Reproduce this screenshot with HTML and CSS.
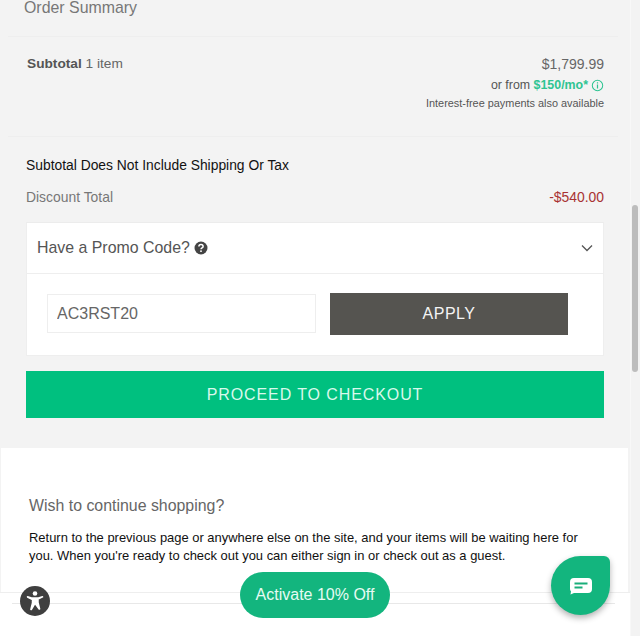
FILE: index.html
```html
<!DOCTYPE html>
<html lang="en">
<head>
<meta charset="utf-8">
<title>Order Summary</title>
<link rel="stylesheet" href="styles.css">
</head>
<body>
<div class="page">
  <section class="summary">
    <h2 class="summary-title">Order Summary</h2>
    <div class="subtotal">
      <div class="subtotal-label"><b>Subtotal</b> 1 item</div>
      <div class="subtotal-prices">
        <div class="price">$1,799.99</div>
        <div class="finance"><span>or from <b>$150/mo*</b></span><svg class="info" viewBox="0 0 14 14" width="13" height="13" aria-hidden="true"><circle cx="7" cy="7" r="5.6" fill="none" stroke="currentColor" stroke-width="1.1"/><path d="M7 6v4.2M7 3.6v1.3" fill="none" stroke="currentColor" stroke-width="1.3"/></svg></div>
        <div class="interest">Interest-free payments also available</div>
      </div>
    </div>
    <div class="totals">
      <p class="note">Subtotal Does Not Include Shipping Or Tax</p>
      <div class="discount"><span>Discount Total</span><span class="discount-value">-$540.00</span></div>
      <div class="promo">
        <div class="promo-head">
          <div class="promo-title"><span>Have a Promo Code?</span><svg class="help" viewBox="0 0 14 14" width="14" height="14" aria-hidden="true"><circle cx="7" cy="7" r="6.5" fill="#444"/><path d="M4.900 5.500c0-1.200 1-1.900 2.100-1.900s2.100.7 2.100 1.800c0 1.600-2.100 1.500-2.100 2.900" fill="none" stroke="#fff" stroke-width="1.500"/><rect x="6.200" y="9.400" width="1.600" height="1.600" fill="#fff"/></svg></div>
          <svg class="chevron" viewBox="0 0 12 8" width="12" height="8" aria-hidden="true"><path d="M1 1.500l5 5 5-5" fill="none" stroke="#555" stroke-width="1.300"/></svg>
        </div>
        <div class="promo-body">
          <input class="promo-input" type="text" value="AC3RST20" aria-label="Promo code">
          <button class="apply" type="button">APPLY</button>
        </div>
      </div>
      <button class="checkout" type="button">PROCEED TO CHECKOUT</button>
    </div>
  </section>
  <section class="continue">
    <h3 class="continue-title">Wish to continue shopping?</h3>
    <p class="continue-text">Return to the previous page or anywhere else on the site, and your items will be waiting here for you. When you're ready to check out you can either sign in or check out as a guest.</p>
  </section>
  <div class="foot"><div class="foot-line"></div></div>
</div>

<div class="scrollbar"><div class="thumb"></div></div>
<button class="a11y" type="button" aria-label="Accessibility">
  <svg viewBox="0 0 30 30" width="30" height="30" aria-hidden="true"><circle cx="15" cy="7.500" r="2.300" fill="#fff"/><path d="M7.500 10.800l4 1.200h7l4-1.200v.1l-4.500 2.100v3.500l1.600 6.500h-.4L15.500 18h-1l-3.200 5.500h-.4l1.600-6.500v-3.500l-4.500-2.100z" fill="#fff" stroke="#fff" stroke-width="1.500" stroke-linejoin="round"/></svg>
</button>
<button class="activate" type="button">Activate 10% Off</button>
<button class="chat" type="button" aria-label="Chat">
  <svg viewBox="0 0 24 18" width="24" height="18" aria-hidden="true"><path d="M5 1h14a4 4 0 0 1 4 4v7a4 4 0 0 1-4 4H5l-3.500 1.500.5-3A4 4 0 0 1 1 12V5a4 4 0 0 1 4-4z" fill="#fff"/><path d="M5.500 6.500h13M5.500 10.500h8" stroke="#1aae7a" stroke-width="1.800"/></svg>
</button>
</body>
</html>
```
FILE: styles.css
```css
* { box-sizing: border-box; }
html, body { margin: 0; padding: 0; height: 100%; overflow: hidden; background: #fff; }
body { font-family: "Liberation Sans", Arial, sans-serif; color: #333; width: 640px; height: 636px; position: relative; }
.page { width: 640px; height: 636px; overflow: hidden; display: flex; flex-direction: column; background: #f3f3f3; padding-right: 12px; }
.summary { height: 448px; flex: none; padding: 0 10px 0 8px; }
.summary-title { margin: 0; height: 37px; padding: 0 0 0 16px; font-size: 15.900px; font-weight: 400; line-height: 15px; color: #777; border-bottom: 1px solid #eee; }
.subtotal { display: flex; justify-content: space-between; height: 100px; padding: 18px 14px 0 19px; border-bottom: 1px solid #eee; }
.subtotal-label { font-size: 13.700px; line-height: 18px; color: #666; }
.subtotal-label b { color: #555; }
.subtotal-prices { text-align: right; }
.price { font-size: 14px; line-height: 18px; color: #666; }
.finance { font-size: 12.400px; line-height: 16px; margin-top: 4px; color: #555; display: flex; align-items: center; justify-content: flex-end; gap: 3px; }
.finance b { color: #2fc492; }
.info { color: #2fc492; }
.interest { font-size: 10.900px; line-height: 12px; margin-top: 4px; color: #555; }
.totals { padding: 0 14px 0 18px; }
.note { margin: 20px 0 0; font-size: 13.850px; line-height: 17px; color: #111; }
.discount { display: flex; justify-content: space-between; margin-top: 15px; font-size: 13.900px; line-height: 17px; color: #777; }
.discount-value { color: #a83232; }
.promo { margin-top: 16px; height: 134px; background: #fff; border: 1px solid #eee; border-top-color: #ececec; }
.promo-head { height: 51px; display: flex; align-items: center; justify-content: space-between; padding: 0 10px 0 10px; border-bottom: 1px solid #eee; }
.promo-title { font-size: 15.900px; color: #555; display: flex; align-items: center; gap: 4px; }
.promo-body { display: flex; gap: 14px; align-items: flex-start; padding: 19px 35px 0 20px; }
.promo-input { width: 269px; height: 39px; margin-top: 1px; border: 1px solid #eee; padding: 0 9px; font: 16px "Liberation Sans", Arial, sans-serif; color: #666; background: #fff; outline: 0; }
.apply { flex: 1; height: 42px; border: 0; background: #555450; color: #f4f4f4; font: 16px "Liberation Sans", Arial, sans-serif; letter-spacing: .5px; }
.checkout { display: block; width: 100%; height: 47px; margin-top: 15px; border: 0; background: #00c07f; color: #d9f8ec; font: 16px "Liberation Sans", Arial, sans-serif; letter-spacing: .9px; }
.continue { height: 144px; flex: none; margin-left: 1px; padding: 49px 40px 0 28px; background: #fff; }
.continue-title { margin: 0; font-size: 15.900px; font-weight: 400; line-height: 18px; color: #666; }
.continue-text { margin: 14px 0 0; font-size: 12.950px; line-height: 18px; color: #111; }
.foot { flex: 1; background: #fff; margin-right: -12px; padding: 10px 25px 0 12px; border-top: 1px solid #eee; }
.foot-line { border-top: 1px solid #e8e8e8; }
.scrollbar { position: absolute; top: 0; right: 0; bottom: 0; width: 10px; background: #f3f3f3; border-left: 1px solid #f8f8f8; }
.thumb { position: absolute; top: 205px; left: 1px; width: 6px; height: 167px; background: #bdbdbd; border-radius: 3px; }
.a11y { position: absolute; left: 20px; top: 586px; width: 30px; height: 30px; padding: 0; border: 0; border-radius: 50%; background: #3f3f3f; }
.a11y svg { display: block; }
.activate { position: absolute; left: 240px; top: 572px; width: 150px; height: 46px; padding: 0; border: 0; border-radius: 23px; background: #13b57e; color: #e6fbf3; font: 16px "Liberation Sans", Arial, sans-serif; }
.chat { position: absolute; left: 551px; top: 556px; width: 59px; height: 59px; padding: 0; border: 0; border-radius: 50% 6px 50% 50%; background: #13b57e; box-shadow: 0 3px 6px rgba(0,0,0,.3); display: flex; align-items: center; justify-content: center; }
```
